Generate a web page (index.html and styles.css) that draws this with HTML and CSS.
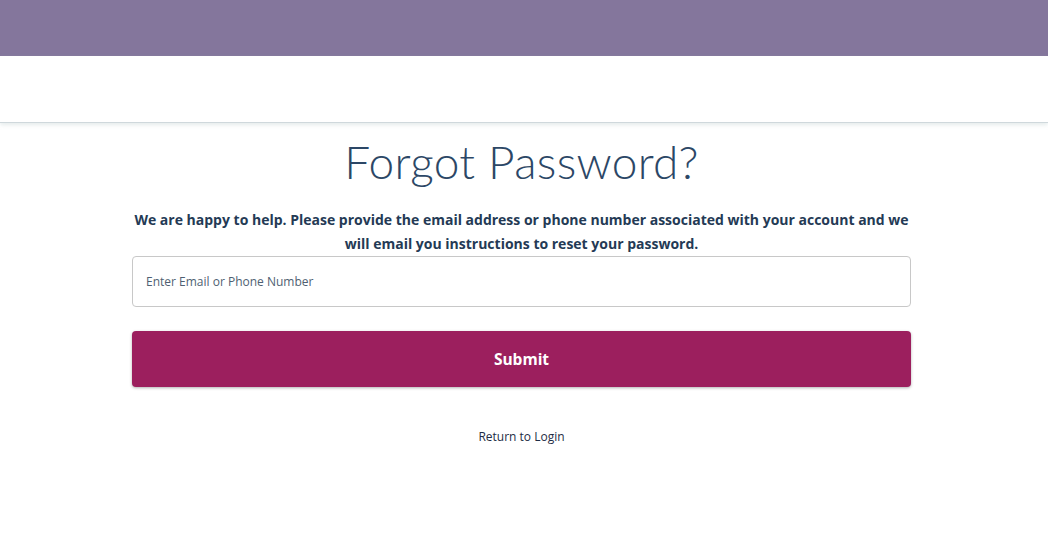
FILE: index.html
```html
<!DOCTYPE html>
<html lang="en">
<head>
<meta charset="utf-8">
<title>Forgot Password</title>
<link rel="stylesheet" href="styles.css">
</head>
<body>
<div class="topbar"></div>
<header class="header"></header>
<main class="main">
  <h1 class="title">Forgot Password?</h1>
  <p class="intro">We are happy to help. Please provide the email address or phone number associated with your account and we will email you instructions to reset your password.</p>
  <form class="form">
    <input class="field" type="text" placeholder="Enter Email or Phone Number">
    <button class="submit" type="button">Submit</button>
  </form>
  <a class="back" href="#">Return to Login</a>
</main>
</body>
</html>
```

FILE: styles.css
```css
* { box-sizing: border-box; }
html, body { margin: 0; padding: 0; background: #fff; }
body { font-family: "Open Sans", "Liberation Sans", sans-serif; color: #243a55; }
.topbar { height: 56px; background: #84769c; }
.header { height: 67px; background: #fff; border-bottom: 1px solid #cfd8dc; box-shadow: 0 2px 4px rgba(180, 200, 200, 0.35); }
.main { width: 779px; margin-left: 132px; display: flex; flex-direction: column; align-items: center; }
.title { margin: 12px 0 0; font-family: Lato, "Open Sans", sans-serif; font-weight: 300; font-size: 46px; line-height: 54px; color: #2c4766; letter-spacing: 0.3px; }
.intro { margin: 19px 0 0; font-size: 14px; font-weight: 700; line-height: 24px; text-align: center; color: #243a55; }
.form { width: 100%; margin-top: 0; display: flex; flex-direction: column; }
.field { height: 51px; width: 100%; border: 1px solid #c8c8c8; border-radius: 4px; padding: 0 13px; font-family: "Open Sans", sans-serif; font-size: 12px; color: #243a55; outline: none; }
.field::placeholder { color: #4f5f72; }
.submit { margin-top: 24px; height: 56px; width: 100%; border: none; border-radius: 4px; background: #9c1f5e; color: #fff; font-family: "Open Sans", sans-serif; font-weight: 700; font-size: 15.5px; box-shadow: 0 1px 3px rgba(0,0,0,0.3); cursor: pointer; }
.back { margin-top: 41px; font-size: 12px; color: #1e2d45; text-decoration: none; }
```
